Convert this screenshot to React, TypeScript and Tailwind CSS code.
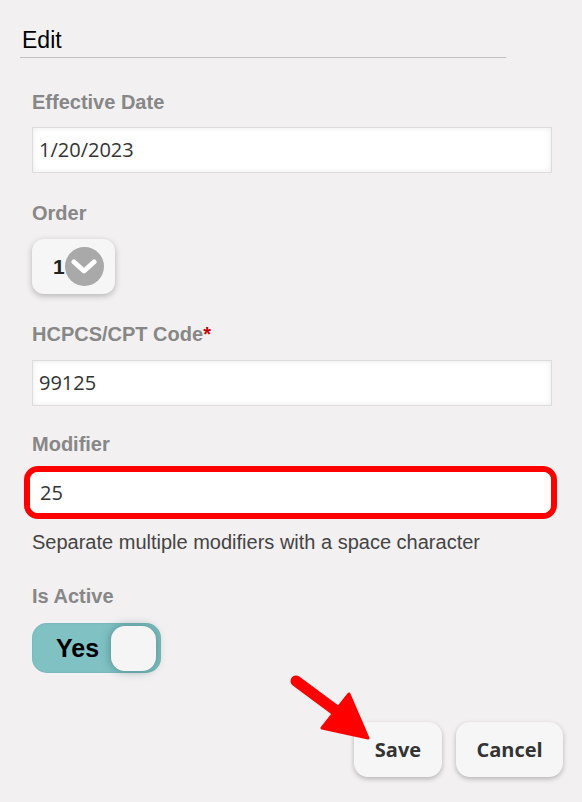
const labelCls = "text-[20px] font-bold leading-none text-[#878787] [font-family:'Liberation_Sans',Arial,sans-serif]";
const inputCls =
  "h-[46px] w-[520px] border border-[#dcdcdc] bg-white pl-[6px] text-[20px] text-[#333] shadow-[inset_0_0_6px_rgba(0,0,0,0.08)] [font-family:'Open_Sans',sans-serif] flex items-center";

function Field({ label, required, children }: { label: string; required?: boolean; children: React.ReactNode }) {
  return (
    <div className="flex flex-col">
      <div className={labelCls}>
        {label}
        {required && <span className="text-[#c00]">*</span>}
      </div>
      {children}
    </div>
  );
}

export default function App() {
  return (
    <div className="relative h-[802px] w-[582px] overflow-hidden bg-[#f2f0f1]">
      <div className="ml-[22px] pt-[27px] text-[23px] leading-[26px] text-black [font-family:'Liberation_Sans',Arial,sans-serif]">
        Edit
      </div>
      <div className="ml-[20px] mt-[4px] h-px w-[486px] bg-[#c3c0c1]" />

      <div className="ml-[32px] mt-[34px] flex flex-col">
        <Field label="Effective Date">
          <div className={`mt-[15px] ${inputCls}`}>1/20/2023</div>
        </Field>

        <div className="mt-[30px]">
          <Field label="Order">
            <div className="mt-[16px] flex h-[55px] w-[83px] items-center rounded-[12px] bg-[#f6f6f6] pl-[21px] shadow-[0_2px_6px_rgba(0,0,0,0.25)]">
              <span className="text-[21px] font-bold leading-none text-[#222] [font-family:'Liberation_Sans',Arial,sans-serif]">1</span>
              <span className="flex h-[39px] w-[39px] shrink-0 items-center justify-center rounded-full bg-[#a9a9a9]">
                <svg width="26" height="16" viewBox="0 0 26 16">
                  <polyline points="3,3 13,12 23,3" fill="none" stroke="white" strokeWidth="5" strokeLinecap="round" strokeLinejoin="round" />
                </svg>
              </span>
            </div>
          </Field>
        </div>

        <div className="mt-[30px]">
          <Field label="HCPCS/CPT Code" required>
            <div className={`mt-[16px] ${inputCls}`}>99125</div>
          </Field>
        </div>

        <div className="mt-[28px]">
          <Field label="Modifier">
            <div className="-ml-[8px] mt-[12px] w-[533px] rounded-[14px] border-[6px] border-[#ff0000]">
              <div className="flex h-[41px] items-center rounded-[8px] bg-white px-[10px] text-[20px] text-[#333] [font-family:'Open_Sans',sans-serif]">
                25
              </div>
            </div>
          </Field>
          <div className="mt-[11px] text-[20px] leading-[24px] text-[#444] [font-family:'Liberation_Sans',Arial,sans-serif]">
            Separate multiple modifiers with a space character
          </div>
        </div>

        <div className="mt-[32px]">
          <Field label="Is Active">
            <div className="mt-[17px] flex h-[50px] w-[129px] items-center rounded-[15px] bg-[#80c1c4] pl-[24px] pr-[5px] shadow-[inset_0_0_2px_rgba(0,0,0,0.15)]">
              <span className="text-[25px] font-bold leading-none text-black [font-family:'Liberation_Sans',Arial,sans-serif]">Yes</span>
              <span className="ml-auto h-[45px] w-[45px] rounded-[14px] bg-[#f6f5f6] shadow-[0_0_10px_rgba(30,90,95,0.55)]" />
            </div>
          </Field>
        </div>
      </div>

      <div className="mr-[19px] mt-[49px] flex justify-end gap-[14px] [font-family:'Open_Sans',sans-serif]">
        <button className="h-[55px] w-[88px] rounded-[14px] bg-[#f6f6f6] text-[20px] font-bold text-[#333] shadow-[0_2px_5px_rgba(0,0,0,0.25)]">
          Save
        </button>
        <button className="h-[55px] w-[107px] rounded-[14px] bg-[#f6f6f6] text-[20px] font-bold text-[#333] shadow-[0_2px_5px_rgba(0,0,0,0.25)]">
          Cancel
        </button>
      </div>

      <svg className="absolute left-0 top-0" width="582" height="802" viewBox="0 0 582 802">
        <line x1="296" y1="681" x2="350" y2="721" stroke="#ff0000" strokeWidth="11" strokeLinecap="round" />
        <polygon points="368,738 322,728 349,694" fill="#ff0000" stroke="#ff0000" strokeWidth="3" strokeLinejoin="round" />
      </svg>
    </div>
  );
}
